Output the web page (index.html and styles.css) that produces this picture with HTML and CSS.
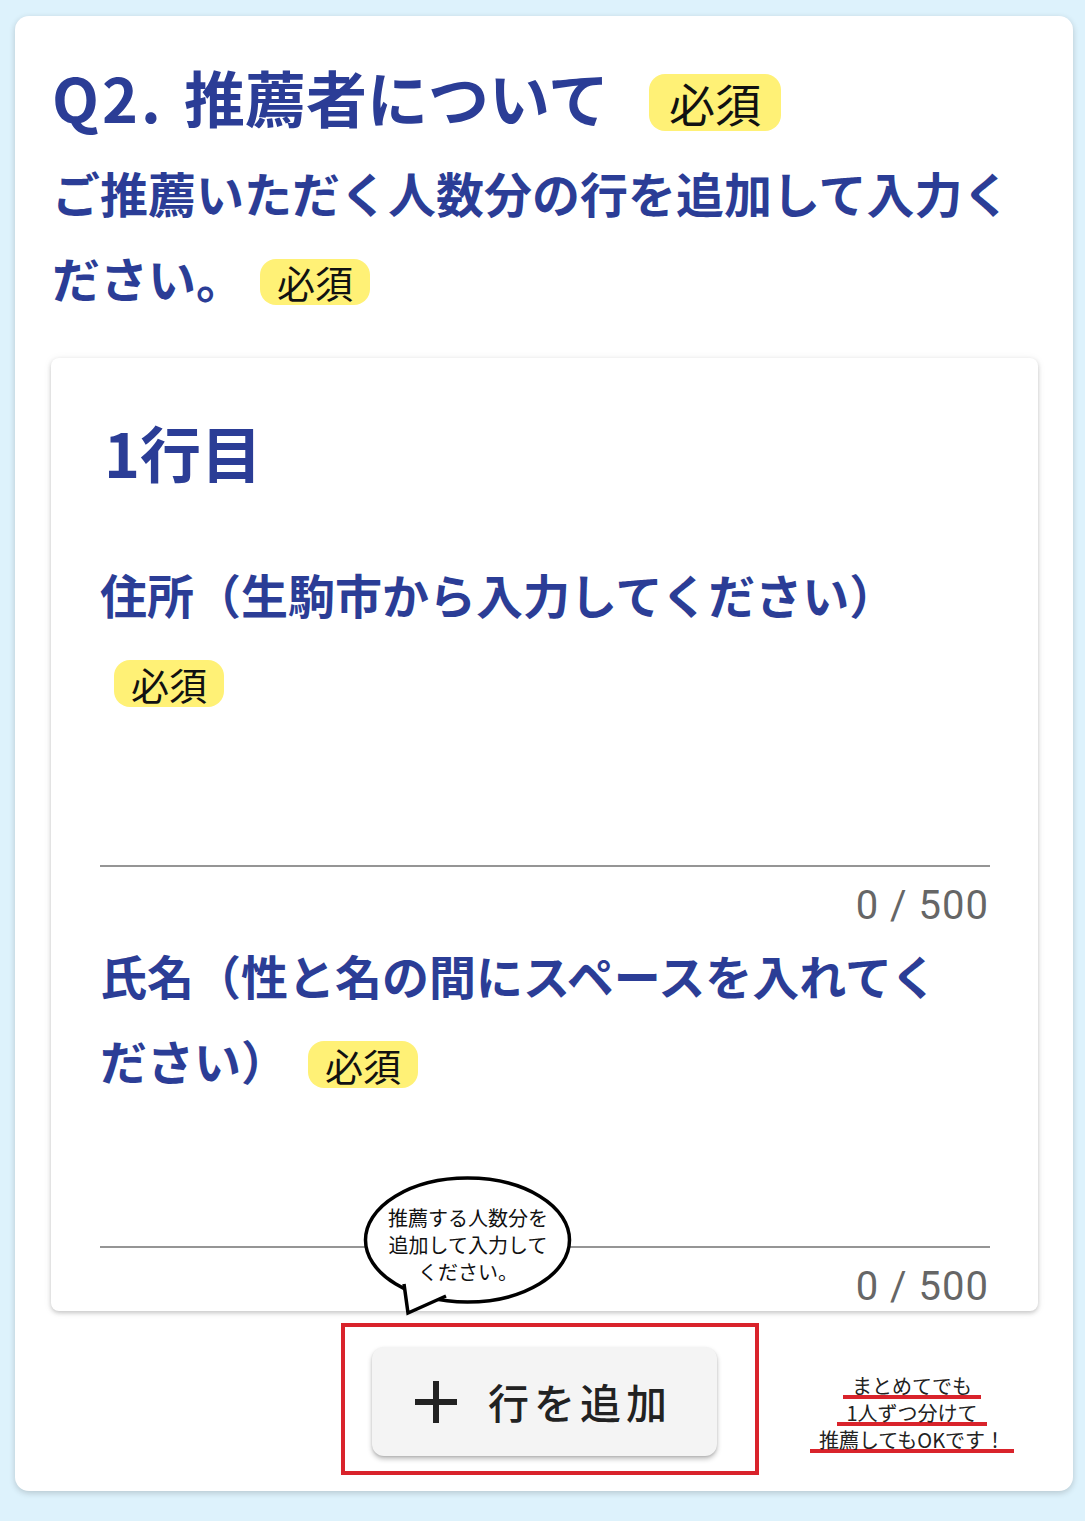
FILE: index.html
```html
<!DOCTYPE html>
<html lang="ja">
<head>
<meta charset="utf-8">
<title>Q2. 推薦者について</title>
<link rel="stylesheet" href="styles.css">
</head>
<body>
<div class="page">
  <section class="card">
    <h2 class="q-title"><span class="qnum">Q2.</span>推薦者について<span class="badge badge-lg">必須</span></h2>
    <p class="q-sub"><span>ご推薦いただく人数分の行を追加して入力く</span><span>ださい。</span><span class="badge badge-md">必須</span></p>

    <div class="row-card">
      <h3 class="row-title">1行目</h3>

      <div class="field field-first">
        <div class="field-label"><span>住所（生駒市から入力してください）</span><span class="badge badge-sm">必須</span></div>
        <div class="field-input"></div>
        <div class="counter">0 / 500</div>
      </div>

      <div class="field field-next">
        <div class="field-label"><span>氏名（性と名の間にスペースを入れてく</span><span>ださい）</span><span class="badge badge-sm badge-gap">必須</span></div>
        <div class="field-input"></div>
        <div class="counter">0 / 500</div>
      </div>
    </div>

    <div class="footer">
      <div class="add-frame">
        <button class="add-btn" type="button">
          <svg class="plus" width="42" height="42" viewBox="0 0 42 42" aria-hidden="true">
            <rect x="18" y="0" width="6" height="42" fill="#222"/>
            <rect x="0" y="18" width="42" height="6" fill="#222"/>
          </svg>
          <span class="add-text">行を追加</span>
        </button>
      </div>
      <div class="note">
        <span class="note-line">まとめてでも</span>
        <span class="note-line">1人ずつ分けて</span>
        <span class="note-line">推薦してもOKです！</span>
      </div>
    </div>

    <div class="bubble">
      <svg class="bubble-shape" width="212" height="142" viewBox="0 0 212 142" aria-hidden="true">
        <ellipse cx="105.5" cy="66" rx="102" ry="62" fill="#fff" stroke="#000" stroke-width="3.5"/>
        <path d="M42 110 L46 139 L84 122" fill="#fff" stroke="#000" stroke-width="3.5" stroke-linejoin="miter"/>
      </svg>
      <div class="bubble-text">推薦する人数分を<br>追加して入力して<br>ください。</div>
    </div>
  </section>
</div>
</body>
</html>
```

FILE: styles.css
```css
html, body {
  margin: 0;
  padding: 0;
}

body {
  background: #ddf2fc;
  font-family: "Noto Sans CJK JP", "Noto Sans", sans-serif;
  color: #2b3d96;
}

.page {
  padding: 16px 12px 30px 15px;
}

.card {
  position: relative;
  background: #fff;
  border-radius: 14px;
  box-shadow: 0 2px 6px rgba(0, 0, 0, 0.18);
  padding: 41px 35px 16px 36px;
}

.q-title {
  margin: 0;
  padding-left: 1px;
  font-size: 61px;
  line-height: 80px;
  font-weight: 700;
  color: #2b3d96;
  white-space: nowrap;
}

.qnum {
  letter-spacing: 0.05em;
  margin-right: 20px;
}

.q-sub {
  margin: 13px 0 0 0;
  padding-left: 1px;
  font-size: 48px;
  line-height: 85px;
  font-weight: 700;
  color: #2b3d96;
}

.badge {
  display: inline-block;
  vertical-align: middle;
  background: #fff176;
  color: #111;
  font-weight: 400;
  border-radius: 16px;
  letter-spacing: 0;
}

.badge-lg {
  font-size: 46px;
  line-height: 57px;
  height: 57px;
  padding: 0 20px;
  margin-left: 40px;
  margin-top: -8px;
}

.badge-md {
  font-size: 38px;
  line-height: 46px;
  height: 46px;
  padding: 0 17px;
  margin-left: 16px;
  margin-top: -5px;
}

.badge-sm {
  font-size: 38px;
  line-height: 47px;
  height: 47px;
  padding: 0 17px;
  margin-left: 14px;
  margin-top: -6px;
}

.badge-gap {
  margin-left: 20px;
}

.row-card {
  margin-top: 38px;
  background: #fff;
  border-radius: 8px;
  box-shadow: 0 2px 4px rgba(0, 0, 0, 0.18), 0 1px 8px rgba(0, 0, 0, 0.08);
  padding: 57px 48px 2px 49px;
}

.row-title {
  margin: 0;
  padding-left: 4px;
  font-size: 61px;
  line-height: 74px;
  font-weight: 700;
  color: #2b3d96;
}

.field-first {
  margin-top: 62px;
}

.field-next {
  margin-top: 4px;
}

.field-label {
  padding-right: 36px;
  font-size: 47px;
  line-height: 85px;
  font-weight: 700;
  color: #2b3d96;
}

.field-input {
  height: 144px;
  border-bottom: 2px solid #959595;
}

.counter {
  margin-top: 17px;
  text-align: right;
  font-family: Roboto, "Noto Sans", sans-serif;
  font-size: 40px;
  line-height: 44px;
  letter-spacing: 1px;
  color: #666;
  padding-right: 1px;
}

.footer {
  display: flex;
  align-items: flex-start;
  margin-top: 12px;
}

.add-frame {
  margin-left: 290px;
  border: 4px solid #d9232b;
  padding: 20px 38px 15px 27px;
}

.add-btn {
  display: flex;
  align-items: center;
  width: 345px;
  height: 109px;
  padding: 0 0 0 43px;
  border: none;
  border-radius: 12px;
  background: #f4f4f4;
  box-shadow: 0 3px 5px rgba(0, 0, 0, 0.25), 0 1px 2px rgba(0, 0, 0, 0.1);
  font-family: "Noto Sans CJK JP", "Noto Sans", sans-serif;
  cursor: pointer;
}

.plus {
  flex: none;
  display: block;
}

.add-text {
  margin-left: 31px;
  font-size: 41px;
  font-weight: 500;
  letter-spacing: 5px;
  color: #222;
  line-height: 1;
}

.note {
  width: 220px;
  margin-left: 43px;
  margin-top: 49px;
  display: flex;
  flex-direction: column;
  align-items: center;
  font-size: 20px;
  line-height: 27px;
  color: #222;
  white-space: nowrap;
}

.note-line {
  display: block;
  padding: 0 9px;
  background-image: linear-gradient(#d9232b, #d9232b);
  background-repeat: no-repeat;
  background-size: 100% 4px;
  background-position: 0 23px;
}

.bubble {
  position: absolute;
  left: 347px;
  top: 1158px;
  width: 212px;
  height: 142px;
}

.bubble-shape {
  display: block;
}

.bubble-text {
  position: absolute;
  left: 0;
  top: 30px;
  width: 212px;
  text-align: center;
  font-size: 20px;
  line-height: 27px;
  color: #111;
}
```
